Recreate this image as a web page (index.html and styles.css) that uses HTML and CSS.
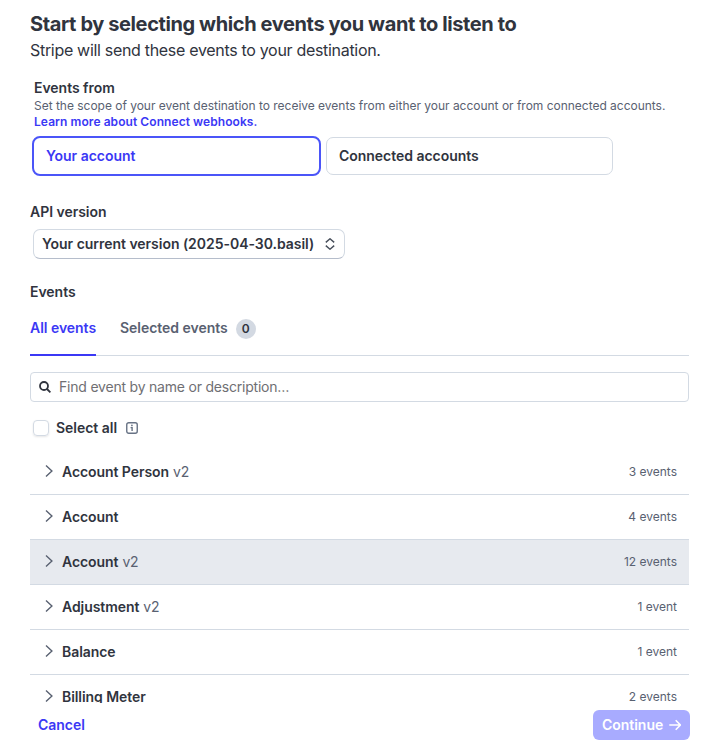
FILE: index.html
```html
<!DOCTYPE html>
<html lang="en">
<head>
<meta charset="utf-8">
<title>Select events</title>
<link rel="stylesheet" href="styles.css">
</head>
<body>
<main class="page">
  <header class="intro">
    <h1 class="title">Start by selecting which events you want to listen to</h1>
    <p class="subtitle">Stripe will send these events to your destination.</p>
  </header>

  <section class="scope">
    <h2 class="label">Events from</h2>
    <p class="hint">Set the scope of your event destination to receive events from either your account or from connected accounts.</p>
    <a class="hint-link">Learn more about Connect webhooks.</a>
    <div class="options">
      <button class="option option-active">Your account</button>
      <button class="option">Connected accounts</button>
    </div>
  </section>

  <section class="version">
    <h2 class="label">API version</h2>
    <button class="select"><span class="select-text">Your current version (2025-04-30.basil)</span>
      <svg class="updown" width="12" height="12" viewBox="0 0 12 12"><path d="M1.8 4.4 6 .8l4.2 3.6M1.8 7.6 6 11.2l4.2-3.6"/></svg>
    </button>
  </section>

  <section class="events">
    <h2 class="label">Events</h2>
    <nav class="tabs">
      <a class="tab tab-active">All events</a>
      <a class="tab"><span class="tab-text">Selected events</span><span class="badge">0</span></a>
    </nav>
    <div class="search">
      <svg class="search-icon" width="12" height="12" viewBox="0 0 12 12"><circle cx="5" cy="5" r="4"/><path d="m8 8 3.4 3.4"/></svg>
      <span class="placeholder">Find event by name or description…</span>
    </div>
    <div class="select-all">
      <span class="checkbox"></span>
      <span class="select-all-text">Select all</span>
      <svg class="info" width="12" height="12" viewBox="0 0 12 12"><rect x=".75" y=".75" width="10.5" height="10.5" rx="2"/><path d="M4.6 5.6h1.5v3.3"/><circle cx="5.9" cy="3.4" r=".85"/></svg>
    </div>
    <ul class="list">
      <li class="row"><svg class="chevron" width="8" height="12" viewBox="0 0 8 12"><path d="m1 .6 5.9 5.4L1 11.4"/></svg><span class="name">Account Person</span><span class="tag">v2</span><span class="count">3 events</span></li>
      <li class="row"><svg class="chevron" width="8" height="12" viewBox="0 0 8 12"><path d="m1 .6 5.9 5.4L1 11.4"/></svg><span class="name">Account</span><span class="count">4 events</span></li>
      <li class="row row-hover"><svg class="chevron" width="8" height="12" viewBox="0 0 8 12"><path d="m1 .6 5.9 5.4L1 11.4"/></svg><span class="name">Account</span><span class="tag">v2</span><span class="count">12 events</span></li>
      <li class="row"><svg class="chevron" width="8" height="12" viewBox="0 0 8 12"><path d="m1 .6 5.9 5.4L1 11.4"/></svg><span class="name">Adjustment</span><span class="tag">v2</span><span class="count">1 event</span></li>
      <li class="row"><svg class="chevron" width="8" height="12" viewBox="0 0 8 12"><path d="m1 .6 5.9 5.4L1 11.4"/></svg><span class="name">Balance</span><span class="count">1 event</span></li>
      <li class="row"><svg class="chevron" width="8" height="12" viewBox="0 0 8 12"><path d="m1 .6 5.9 5.4L1 11.4"/></svg><span class="name">Billing Meter</span><span class="count">2 events</span></li>
    </ul>
  </section>

  <footer class="footer">
    <button class="cancel">Cancel</button>
    <button class="continue"><span class="continue-text">Continue</span>
      <svg class="arrow" width="12" height="12" viewBox="0 0 12 12"><path d="M.3 6h10.9M6.7 1.3 11.4 6l-4.7 4.7"/></svg>
    </button>
  </footer>
</main>
</body>
</html>
```

FILE: styles.css
```css
* { box-sizing: border-box; }

body {
  margin: 0;
  height: 753px;
  overflow: hidden;
  background: #fff;
  color: #30343e;
  font: 600 14px/20px Inter, "Liberation Sans", sans-serif;
  letter-spacing: -.03px;
}

h1, h2, p, ul { margin: 0; padding: 0; }
svg { fill: none; flex: none; }
button { font: inherit; letter-spacing: inherit; color: inherit; margin: 0; background: #fff; }

.page {
  display: flex;
  flex-direction: column;
  height: 753px;
  padding: 10px 33px 13px 30px;
}

.title { font-size: 20px; line-height: 28px; font-weight: 700; letter-spacing: -.39px; white-space: nowrap; }
.subtitle { font-size: 16px; line-height: 24px; font-weight: 400; letter-spacing: -.31px; }
.label { font-size: 14px; line-height: 20px; font-weight: 600; }

.scope { margin-top: 16px; padding-left: 4px; }
.hint { font-size: 12px; line-height: 16px; font-weight: 400; letter-spacing: -.018px; color: #596171; white-space: nowrap; }
.hint-link { display: block; font-size: 12px; line-height: 16px; letter-spacing: .07px; color: #3b38f5; }

.options { display: flex; align-items: center; gap: 5px; margin: 6px 0 0 -2px; }
.option {
  width: 287px;
  height: 38px;
  padding: 0 12px;
  border: 1px solid #d3dae3;
  border-radius: 7px;
  text-align: left;
}
.option-active {
  width: 289px;
  height: 40px;
  border: 2px solid #4b55f8;
  border-radius: 8px;
  color: #3b38f5;
}

.version { margin-top: 26px; }
.select {
  display: flex;
  align-items: center;
  justify-content: space-between;
  width: 312px;
  height: 30px;
  margin: 7px 0 0 3px;
  padding: 0 8px;
  border: 1px solid #d3dae3;
  border-bottom-color: #b5bdcb;
  border-radius: 7px;
}
.updown { stroke: #474e5a; stroke-width: 1.4; }

.events { margin-top: 23px; }
.tabs { display: flex; gap: 24px; height: 54px; border-bottom: 1px solid #d3dae3; }
.tab { display: flex; align-items: center; height: 54px; padding-bottom: 2px; color: #596171; }
.tab-active { width: 66px; white-space: nowrap; color: #3b38f5; border-bottom: 2px solid #3b38f5; padding-bottom: 0; }
.badge {
  width: 20px;
  height: 20px;
  margin: 2px 0 0 8px;
  border-radius: 50%;
  background: #d3d9e2;
  color: #30343e;
  font-size: 12px;
  text-align: center;
}

.search {
  display: flex;
  align-items: center;
  gap: 8px;
  height: 30px;
  margin-top: 16px;
  padding: 0 8px;
  border: 1px solid #d3dae3;
  border-radius: 4px;
}
.search-icon { stroke: #30343e; stroke-width: 1.8; }
.placeholder { font-weight: 400; letter-spacing: -.21px; color: #6f6f73; }

.select-all { display: flex; align-items: center; height: 20px; margin: 16px 0 12px 3px; }
.checkbox {
  width: 16px;
  height: 16px;
  margin-right: 7px;
  border: 1px solid #d3dae3;
  border-radius: 4px;
  box-shadow: 0 1px 2px rgba(48, 49, 61, .12);
}
.info { margin-left: 9px; stroke: #687385; stroke-width: 1.4; }
.info circle { fill: #687385; stroke: none; }

.list { height: 253px; overflow: hidden; list-style: none; }
.row {
  display: flex;
  align-items: center;
  height: 45px;
  padding: 0 12px 0 14px;
  border-bottom: 1px solid #d3dae3;
}
.row-hover { background: #e7eaef; }
.chevron { margin: -2px 9.5px 0 .5px; stroke: #596171; stroke-width: 1.4; }
.name { letter-spacing: -.07px; }
.tag { margin-left: 4px; font-weight: 400; letter-spacing: -.2px; color: #596171; }
.count { margin-left: auto; font-size: 12px; font-weight: 400; letter-spacing: 0; color: #596171; }

.footer { display: flex; justify-content: space-between; margin: 7px -1px 0 0; height: 30px; }
.cancel { padding: 0 8px; border: 0; color: #3b38f5; }
.continue {
  display: flex;
  align-items: center;
  justify-content: space-between;
  width: 97px;
  padding: 0 9px;
  border: 0;
  border-radius: 6px;
  background: #a8abff;
  color: #fff;
}
.arrow { stroke: #fff; stroke-width: 1.6; }
```
